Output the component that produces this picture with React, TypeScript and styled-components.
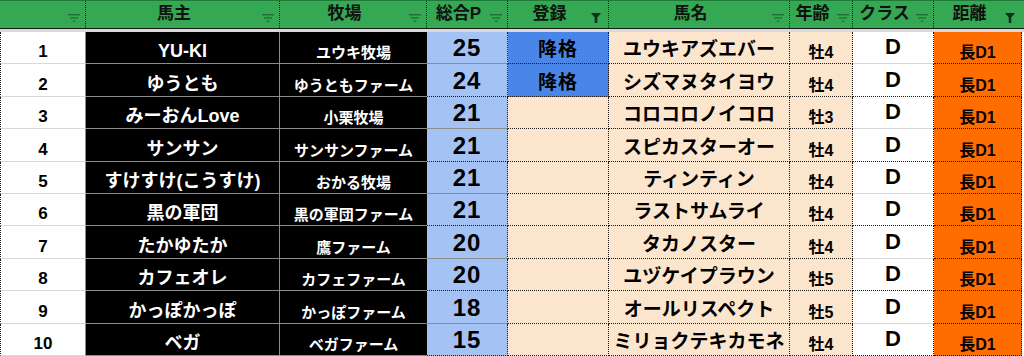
import React from 'react'
import styled, { createGlobalStyle } from 'styled-components'

const FONT = '"Liberation Sans", "Noto Sans CJK JP", sans-serif'
const COLS = '86px 194px 147px 81px 101px 181px 63px 81px 88px 2px'

const C = {
  green: '#34a853',
  greenDark: '#1f7a3a',
  black: '#000000',
  gridGray: '#8c8c8c',
  light: '#d9d9d9',
  blueLight: '#a4c2f4',
  blue: '#4a86e8',
  peach: '#fce5cd',
  orange: '#ff6d01',
  dot: '#1a1a1a',
}

const GlobalStyle = createGlobalStyle`
  html, body { margin: 0; padding: 0; background: #fff; overflow: hidden; }
  body { font-family: ${FONT}; }
`

const Sheet = styled.div`
  width: 1024px;
  height: 356px;
  overflow: hidden;
  background: #fff;
`

const HeaderRow = styled.div`
  display: grid;
  grid-template-columns: ${COLS};
  height: 29px;
  box-sizing: border-box;
  background: ${C.green};
  border-top: 1px solid ${C.greenDark};
  border-bottom: 1px solid #1b1b1b;
`

// text is centred in the space left of the filter button
const HeaderCell = styled.div<{ $last?: boolean }>`
  position: relative;
  display: flex;
  align-items: center;
  justify-content: center;
  box-sizing: border-box;
  border-right: ${({ $last }) => ($last ? 'none' : `1px dotted ${C.dot}`)};
  font-size: 17px;
  font-weight: 700;
  color: #111;
  line-height: 1;
  padding: 0 17px 2px 0;
  white-space: nowrap;
`

const FilterSlot = styled.span<{ $right: number }>`
  position: absolute;
  right: ${({ $right }) => $right}px;
  bottom: 5px;
  display: flex;
`

const Band = styled.div`
  height: 3px;
  background: ${C.light};
`

const Body = styled.div`
  display: grid;
  grid-template-rows: repeat(10, 32.4px);
`

const Row = styled.div`
  display: grid;
  grid-template-columns: ${COLS};
`

type Edge = 'dot' | 'gray' | 'light' | 'none'

const edge = (e: Edge) =>
  e === 'dot' ? `1px dotted ${C.dot}` :
  e === 'gray' ? `1px solid ${C.gridGray}` :
  e === 'light' ? `1px solid ${C.light}` : 'none'

const Cell = styled.div<{
  $bg: string
  $color: string
  $size: number
  $right: Edge
  $bottom: Edge
  $left?: Edge
  $pb: number
  $ls?: number
}>`
  display: flex;
  align-items: flex-end;
  justify-content: center;
  box-sizing: border-box;
  background: ${({ $bg }) => $bg};
  color: ${({ $color }) => $color};
  font-size: ${({ $size }) => $size}px;
  font-weight: 700;
  line-height: 1;
  letter-spacing: ${({ $ls }) => $ls ?? 0}px;
  padding-bottom: ${({ $pb }) => $pb}px;
  border-right: ${({ $right }) => edge($right)};
  border-bottom: ${({ $bottom }) => edge($bottom)};
  border-left: ${({ $left }) => ($left ? edge($left) : 'none')};
  white-space: nowrap;
  overflow: hidden;
`

function FilterIcon() {
  return (
    <svg width="13" height="9" viewBox="0 0 13 9">
      <rect x="0" y="0" width="12" height="1.4" fill="#1d5a30" opacity="0.75" />
      <rect x="2" y="3.3" width="8" height="1.4" fill="#1d5a30" opacity="0.75" />
      <rect x="4.8" y="6.6" width="2.6" height="1.4" fill="#1d5a30" opacity="0.75" />
    </svg>
  )
}

function ActiveFilterIcon() {
  return (
    <svg width="10" height="10" viewBox="0 0 10 10">
      <path d="M0 0 H10 L6.3 4.6 V10 H3.7 V4.6 Z" fill="#12301b" />
    </svg>
  )
}

const headers = [
  { label: '', filter: 'off', r: 4 },
  { label: '馬主', filter: 'off', r: 4 },
  { label: '牧場', filter: 'off', r: 4 },
  { label: '総合P', filter: 'off', r: 4 },
  { label: '登録', filter: 'on', r: 7 },
  { label: '馬名', filter: 'off', r: 4 },
  { label: '年齢', filter: 'off', r: 2 },
  { label: 'クラス', filter: 'off', r: 4 },
  { label: '距離', filter: 'on', r: 7 },
  { label: '', filter: 'none', r: 0 },
]

const rows = [
  { owner: 'YU-KI', farm: 'ユウキ牧場', pts: 25, reg: '降格', horse: 'ユウキアズエバー', age: '牡4' },
  { owner: 'ゆうとも', farm: 'ゆうともファーム', pts: 24, reg: '降格', horse: 'シズマヌタイヨウ', age: '牡4' },
  { owner: 'みーおんLove', farm: '小栗牧場', pts: 21, reg: '', horse: 'コロコロノイコロ', age: '牡3' },
  { owner: 'サンサン', farm: 'サンサンファーム', pts: 21, reg: '', horse: 'スピカスターオー', age: '牡4' },
  { owner: 'すけすけ(こうすけ)', farm: 'おかる牧場', pts: 21, reg: '', horse: 'ティンティン', age: '牡4' },
  { owner: '黒の軍団', farm: '黒の軍団ファーム', pts: 21, reg: '', horse: 'ラストサムライ', age: '牡4' },
  { owner: 'たかゆたか', farm: '鷹ファーム', pts: 20, reg: '', horse: 'タカノスター', age: '牡4' },
  { owner: 'カフェオレ', farm: 'カフェファーム', pts: 20, reg: '', horse: 'ユヅケイプラウン', age: '牡5' },
  { owner: 'かっぽかっぽ', farm: 'かっぽファーム', pts: 18, reg: '', horse: 'オールリスペクト', age: '牡5' },
  { owner: 'ベガ', farm: 'ベガファーム', pts: 15, reg: '', horse: 'ミリョクテキカモネ', age: '牡4' },
]

export default function App() {
  return (
    <Sheet>
      <GlobalStyle />
      <HeaderRow>
        {headers.map((h, i) => (
          <HeaderCell key={i} $last={i >= 8}>
            {h.label}
            {h.filter !== 'none' && (
              <FilterSlot $right={h.r}>
                {h.filter === 'on' ? <ActiveFilterIcon /> : <FilterIcon />}
              </FilterSlot>
            )}
          </HeaderCell>
        ))}
      </HeaderRow>
      <Band />
      <Body>
        {rows.map((r, i) => (
          <Row key={i}>
            <Cell $bg="#fff" $color="#000" $size={17} $pb={3} $left="dot" $right="gray" $bottom="light">
              {i + 1}
            </Cell>
            <Cell $bg={C.black} $color="#fff" $size={18} $pb={3} $right="gray" $bottom="gray">
              {r.owner}
            </Cell>
            <Cell $bg={C.black} $color="#fff" $size={15} $pb={3} $right="none" $bottom="gray">
              {r.farm}
            </Cell>
            <Cell $bg={C.blueLight} $color="#000" $size={24} $pb={3} $ls={1} $right="dot" $bottom={i % 2 ? 'dot' : 'gray'}>
              {r.pts}
            </Cell>
            <Cell $bg={r.reg ? C.blue : C.peach} $color="#000" $size={19} $pb={4} $ls={1} $right="dot" $bottom="dot">
              {r.reg}
            </Cell>
            <Cell $bg={C.peach} $color="#000" $size={19} $pb={4} $right="dot" $bottom="dot">
              {r.horse}
            </Cell>
            <Cell $bg={C.peach} $color="#000" $size={16} $pb={2} $right="dot" $bottom="dot">
              {r.age}
            </Cell>
            <Cell $bg="#fff" $color="#000" $size={22} $pb={5} $right="dot" $bottom={i % 2 ? 'dot' : 'light'}>
              D
            </Cell>
            <Cell $bg={C.orange} $color="#000" $size={16} $pb={2} $right="dot" $bottom="dot">
              長D1
            </Cell>
            <Cell $bg="#fff" $color="#000" $size={10} $pb={0} $right="none" $bottom="none" />
          </Row>
        ))}
      </Body>
    </Sheet>
  )
}
